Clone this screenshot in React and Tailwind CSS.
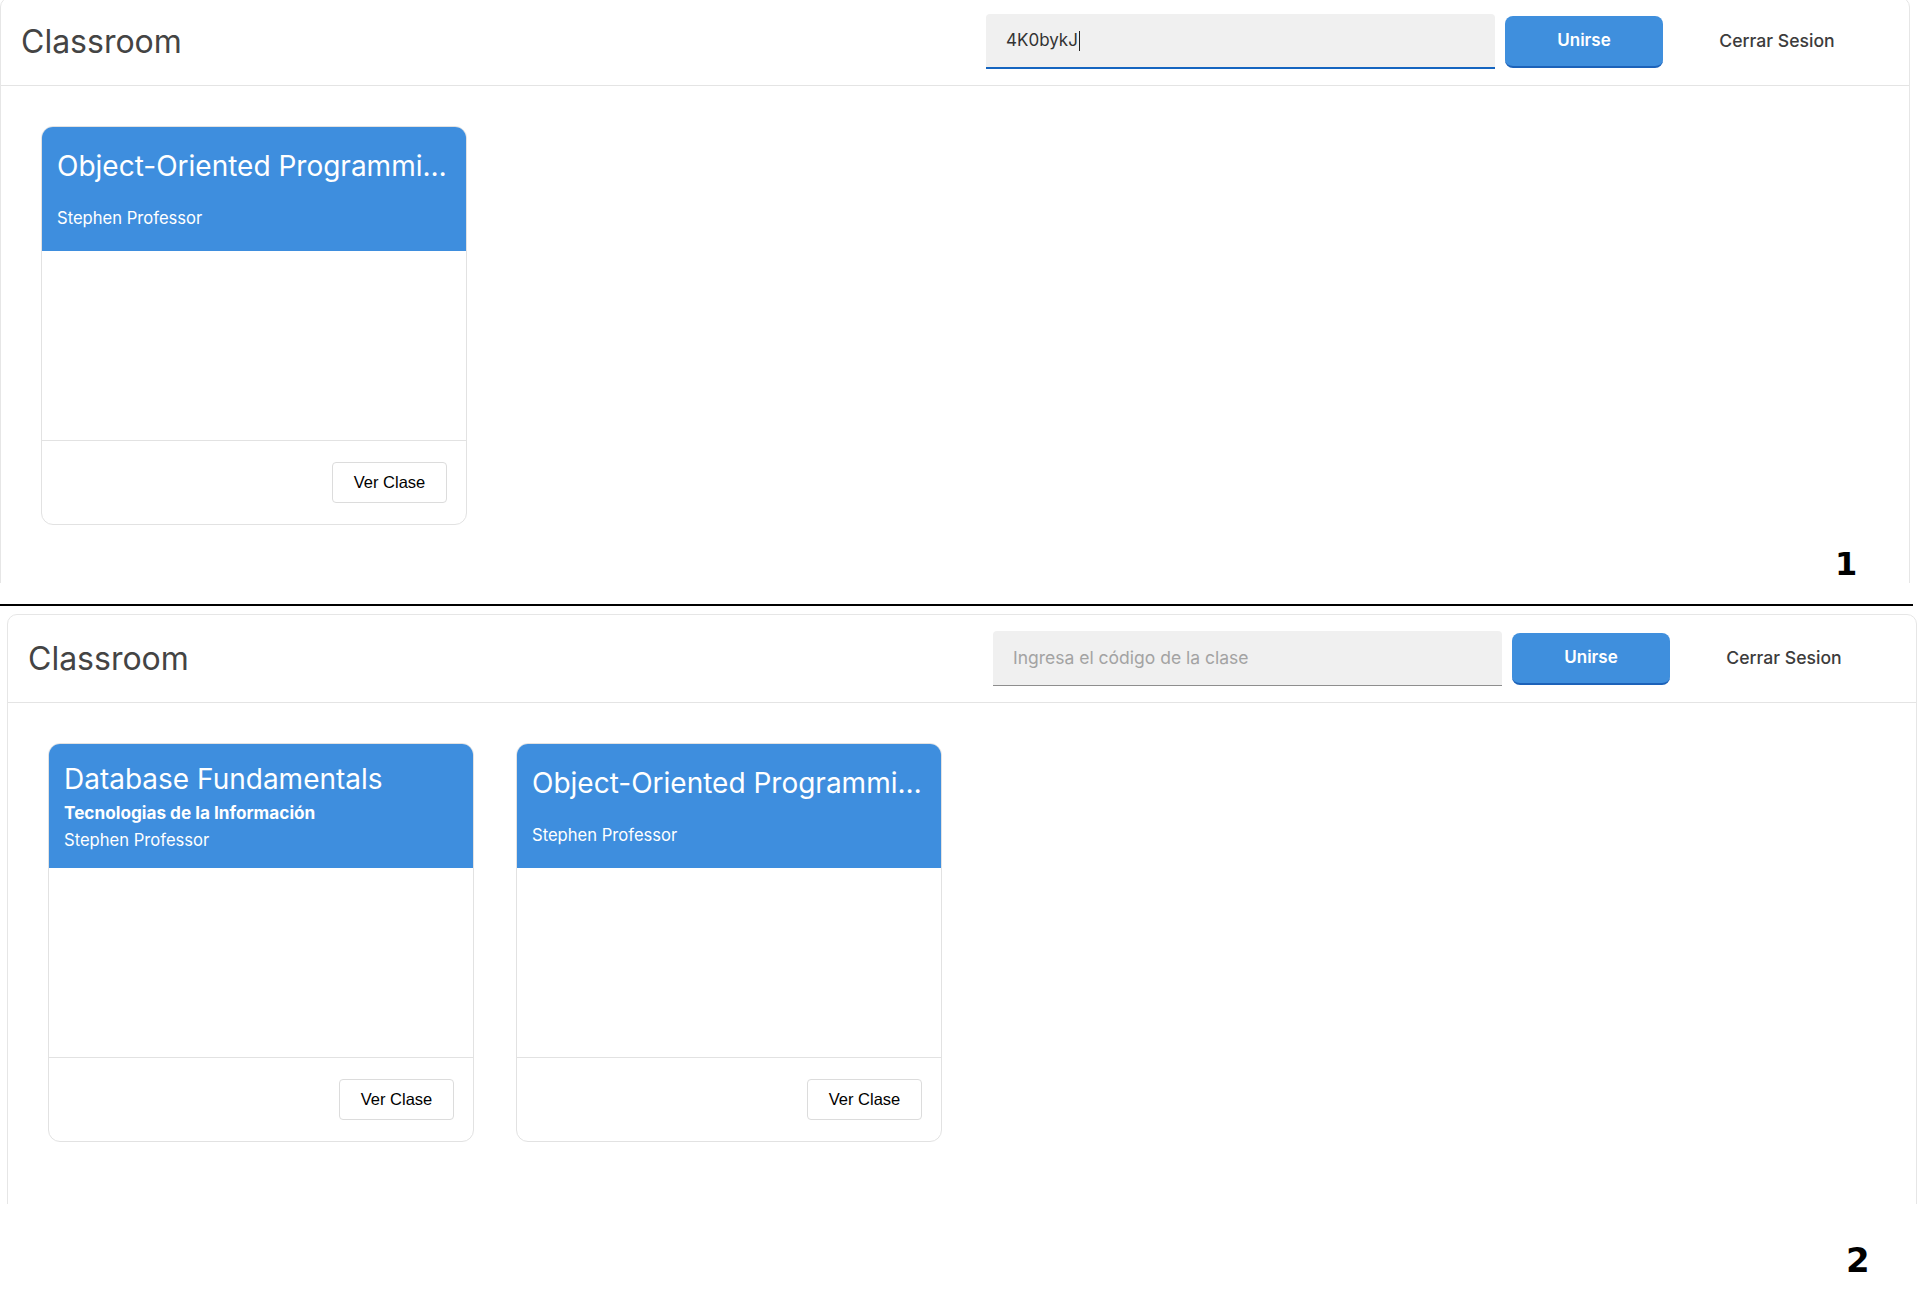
import React from "react";

const cardsA = [
  { title: "Object-Oriented Programming with Java", sub: null },
];
const cardsB = [
  { title: "Database Fundamentals", sub: "Tecnologias de la Información" },
  { title: "Object-Oriented Programming with Java", sub: null },
];

function Card({ title, sub }) {
  return (
    <div className="w-[426px] h-[399px] border border-[#e2e2e2] rounded-[12px] overflow-hidden flex flex-col bg-white">
      <div className="h-[124px] bg-[#3e8ede] flex flex-col justify-center px-[15px] text-white">
        <div className="text-[28px] leading-[34px] whitespace-nowrap overflow-hidden text-ellipsis">
          {title}
        </div>
        {sub ? (
          <div className="mt-[6px] text-[17.2px] leading-[22px] font-bold whitespace-nowrap">{sub}</div>
        ) : (
          <div className="mt-[6px] h-[13px]" />
        )}
        <div className="mt-[5px] text-[16.6px] leading-[22px] whitespace-nowrap">Stephen Professor</div>
      </div>
      <div className="h-[190px] border-b border-[#e2e2e2]" />
      <div className="flex-1 flex items-center justify-end pr-[19px]">
        <button
          className="w-[115px] h-[41px] border border-[#dcdcdc] rounded-[4px] bg-white text-black text-[16.5px]"
          style={{ fontFamily: '"Liberation Sans", Arial, sans-serif' }}
        >
          Ver Clase
        </button>
      </div>
    </div>
  );
}

function Panel({ value, cards }) {
  return (
    <div className="w-[1910px] h-[700px] border border-[#e6e6e6] rounded-[10px] bg-white flex flex-col">
      <div className="h-[88px] shrink-0 border-b border-[#e4e4e4] flex items-center justify-between pl-[20px] pr-[32px]">
        <div className="text-[32px] text-[#444] leading-none">Classroom</div>
        <div className="flex items-center">
          {value ? (
            <div className="w-[509px] h-[55px] bg-[#f0f0f0] rounded-t-[4px] border-b-2 border-[#1565c0] flex items-center px-[20px] text-[17px] text-[#333]">
              <span>{value}</span>
              <span className="inline-block w-px h-[20px] bg-[#222] ml-[1px]" />
            </div>
          ) : (
            <div className="w-[509px] h-[55px] bg-[#f0f0f0] rounded-t-[4px] border-b border-[#8e8e8e] flex items-center px-[20px] text-[17.5px] text-[#a3a3a3]">
              Ingresa el código de la clase
            </div>
          )}
          <button className="ml-[10px] w-[158px] h-[52px] bg-[#3f8fdd] rounded-[8px] border-b-2 border-[#1c62b9] text-white font-semibold text-[17px]">
            Unirse
          </button>
          <button className="ml-[14px] w-[200px] h-[40px] text-[17.6px] font-medium text-[#3c3c3c]">
            Cerrar Sesion
          </button>
        </div>
      </div>
      <div className="flex gap-[42px] pl-[40px] pt-[40px]">
        {cards.map((c, i) => (
          <Card key={i} {...c} />
        ))}
      </div>
    </div>
  );
}

export default function App() {
  return (
    <div
      className="relative w-[1917px] h-[1315px] bg-white overflow-hidden"
      style={{ fontFamily: "Inter, 'Noto Sans', sans-serif" }}
    >
      <div className="h-[583px] overflow-hidden">
        <div className="-mt-[3px]">
          <Panel value="4K0bykJ" cards={cardsA} />
        </div>
      </div>
      <div className="h-[21px]" />
      <div className="h-[2px] w-[1913px] bg-black" />
      <div className="h-[8px]" />
      <div className="h-[590px] overflow-hidden pl-[7px]">
        <Panel value={null} cards={cardsB} />
      </div>
      <span
        className="absolute left-[1835px] top-[548px] text-[32px] leading-none font-bold text-black"
        style={{ fontFamily: "'DejaVu Sans', sans-serif" }}
      >
        1
      </span>
      <span
        className="absolute left-[1846px] top-[1243px] text-[34px] leading-none font-bold text-black"
        style={{ fontFamily: "'DejaVu Sans', sans-serif" }}
      >
        2
      </span>
    </div>
  );
}
